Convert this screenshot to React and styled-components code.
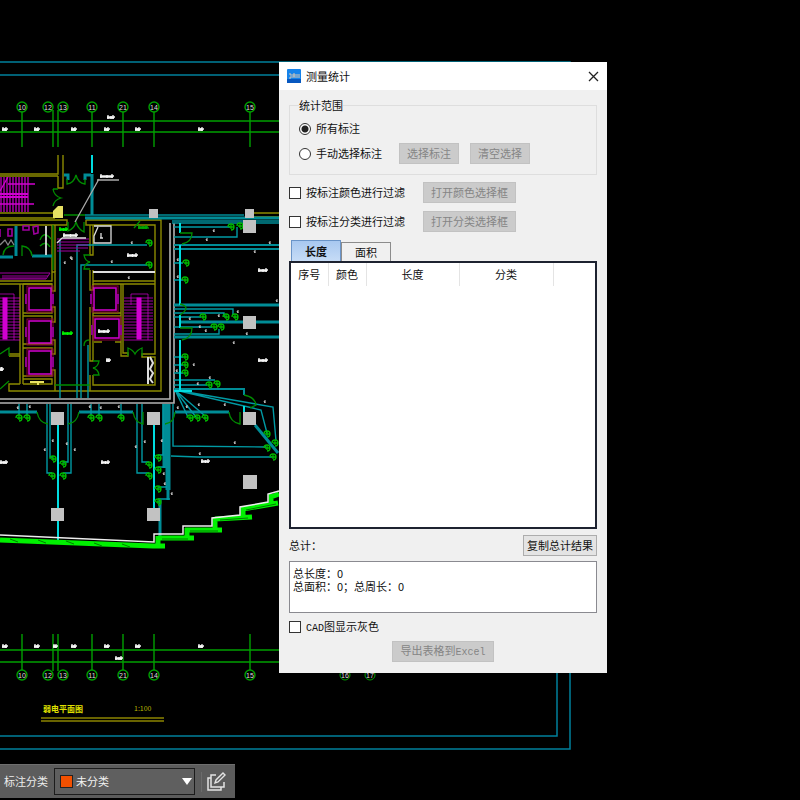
import React, { useState } from "react";
import styled, { createGlobalStyle } from "styled-components";

const CYAN = "#008c96";
const BRIGHT = "#00dce0";
const GREEN = "#00a000";
const LIME = "#00f000";
const OLIVE = "#8c8a00";
const PURPLE = "#d000d0";
const GRAY = "#c2c2c2";

// [bubble x, stem x, number]
const AXES = [
  [22, 22, "10"],
  [48, 53, "12"],
  [63, 58, "13"],
  [92, 92, "11"],
  [123, 123, "21"],
  [154, 154, "14"],
  [250, 250, "15"],
];

const COLUMNS = [
  [149, 209, 9],
  [245, 209, 9],
  [243, 220, 13],
  [243, 316, 13],
  [51, 412, 13],
  [147, 412, 13],
  [243, 412, 13],
  [243, 475, 14],
  [51, 508, 13],
  [147, 508, 13],
];

const OUTLETS = [
  [149, 243], [149, 265], [186, 263], [185, 280], [231, 227], [240, 226],
  [203, 317], [226, 317], [235, 317], [214, 327], [221, 327],
  [185, 357], [185, 365], [185, 373], [209, 385], [217, 384],
  [19, 418], [27, 418], [91, 418], [99, 418], [121, 418], [190, 418],
  [197, 418], [205, 418], [53, 459], [63, 464], [52, 476], [63, 476],
  [149, 465], [158, 458], [158, 470], [149, 476], [158, 489], [158, 502],
  [267, 434], [275, 443], [267, 448], [273, 457],
];

const MARKS = [
  [206, 240], [213, 231], [269, 243], [254, 252], [177, 260], [177, 277],
  [237, 312], [218, 316], [189, 319], [199, 327], [205, 331], [246, 334],
  [233, 343], [193, 365], [176, 371], [209, 378], [197, 384], [131, 243],
  [111, 262], [64, 263], [70, 258], [71, 259], [128, 278], [17, 408],
  [29, 407], [89, 407], [100, 408], [118, 407], [52, 441], [44, 450],
  [66, 444], [74, 450], [135, 447], [144, 442], [161, 441], [163, 474],
  [164, 484], [171, 494], [177, 408], [186, 407], [198, 405], [224, 405],
  [264, 402], [234, 443], [199, 454], [276, 301],
];

// [x, y, width]
const ROOMS = [
  [127, 255, 11], [258, 270, 10], [258, 360, 10], [0, 462, 8], [101, 462, 9],
  [201, 461, 9], [98, 331, 12], [106, 360, 5], [0, 369, 4],
];

const range = (from, to, step) => {
  const out = [];
  for (let i = from; i <= to; i += step) out.push(i);
  return out;
};

const Scribble = ({ x, y, w, color = "#f4f4f4" }) => (
  <path
    d={`M${x} ${y} h${w} M${x} ${y + 1} h${w - 1} M${x + 1} ${y - 2} v4 M${x + w / 2} ${y - 1} v3 M${x + w - 2} ${y - 2} v4`}
    stroke={color}
    strokeWidth="1.3"
    fill="none"
  />
);

const AxisRow = ({ top }) => {
  const bubbleY = top ? 107 : 675;
  return (
    <g stroke={GREEN} fill="none" strokeWidth="1.4">
      {AXES.map(([x, stem, no]) => (
        <g key={no}>
          <path d={top ? `M${stem} 110 V147` : `M${stem} 634 V671`} />
          <circle cx={x} cy={bubbleY} r="5" fill="#000" />
          <text x={x} y={bubbleY + 3} fontSize="7" fill="#ddd" stroke="none" textAnchor="middle">
            {no}
          </text>
        </g>
      ))}
      <path d={top ? "M0 121 H279 M0 132 H279" : "M0 650 H279 M0 662 H279"} />
      {[2, 34, 71, 104, 135, 198].map((x) => (
        <Scribble key={x} x={x} y={top ? 129 : 646} w={6} />
      ))}
      {!top && <Scribble x={53} y={646} w={5} />}
      <Scribble x={top ? 107 : 115} y={top ? 117 : 658} w={8} />
    </g>
  );
};

const Stairs = ({ x, width, spine }) => (
  <g stroke={PURPLE} fill="none">
    <path d={range(298, 340, 3).map((y) => `M${x} ${y} H${x + width}`).join(" ")} opacity="0.75" />
    <rect x={spine} y="298" width="4" height="41" fill={PURPLE} />
    <path d={`M${spine - 6} 305 V294 H${spine + 11} V340`} opacity="0.7" />
  </g>
);

const Lift = ({ x, y, w = 22, h = 22 }) => (
  <g fill="none">
    <rect x={x - 2} y={y - 2} width={w + 4} height={h + 4} stroke="#8b0038" />
    <rect x={x} y={y} width={w} height={h} stroke="#d400d0" strokeWidth="1.5" />
    <path d={`M${x - 3} ${y + 6} v10 M${x + w + 2} ${y + 6} v10`} stroke="#8e008e" strokeWidth="2" />
  </g>
);

const FloorPlan = () => (
  <Drawing viewBox="0 0 800 800" preserveAspectRatio="xMinYMin slice" aria-hidden="true">
    {/* sheet frame */}
    <g stroke="#00809c" fill="none" strokeWidth="1.5">
      <path d="M0 62 H570 V749 H0" />
      <path d="M0 75 H557 V736 H0" />
    </g>
    <AxisRow top />
    <AxisRow />
    <g stroke={GREEN} fill="#000">
      <circle cx="345" cy="675" r="5" />
      <circle cx="370" cy="675" r="5" />
    </g>
    <g fontSize="7" fill="#ddd" textAnchor="middle">
      <text x="345" y="678">16</text>
      <text x="370" y="678">17</text>
    </g>

    {/* stair block at the upper left */}
    <g stroke={PURPLE} fill="none">
      <path d={range(1, 29, 3).map((x) => `M${x} 177 V212`).join(" ")} strokeWidth="1.4" opacity="0.85" />
      <path d="M0 194 H28 M0 197 H28" strokeWidth="2" />
      <path d="M8 184 H35 M0 204 H34 M0 191 L8 177" strokeWidth="1.3" />
    </g>

    {/* walls */}
    <g stroke={OLIVE} fill="none" strokeWidth="1.4">
      <path d="M58 155 V174 H0 M58 176 H0 M63 155 V188 H58 V176" />
      <path d="M0 213 H58 M0 218 H55 M254 213 H279 M254 217 H279" />
      <path d="M0 220 H67 V225 H0 M52 225 V281 H0 M55 225 V272 M0 284 H52" />
      <path d="M86 220 H161 V391 H9 V384 H20 M86 220 V225 H155 V354 H142 V357 H155 V385 H93 V375" />
      <path d="M90 225 V255 H93 V225 M90 270 V290 H93 V270 M93 281 H155 M93 284 H155" />
      <path d="M20 284 V384 M23 284 V384 M9 354 H20 M9 356 H20" />
      <path d="M23 284 H52 V291 H55 V272 H52 M23 313 H52 V307 H55 V322 H52 V316 H23" />
      <path d="M23 344 H52 V340 H55 V354 H52 V348 H23 M23 376 H52 V370 H55 V391 M23 379 H52 V384 H23" />
      <path d="M93 290 V284 M121 284 V356 H128 V353 H123 V284 M90 307 V361 H93 V307 M93 313 H121 M93 316 H121 M90 375 V391 M94 342 H102 M115 342 H121" />
    </g>
    <path d="M53 218 V211 L58 206 H63 V218 Z" fill="#e8e264" />
    <path d="M30 382 H44 M38 381 V385" stroke="#e8e264" strokeWidth="2" />

    {/* outer wall of the core */}
    <path d="M170 223 V399 H0 M174 223 V403 H0" stroke="#b4b4b4" strokeWidth="1.6" fill="none" />

    {/* cyan bands */}
    <g stroke={CYAN} fill="none">
      <path d="M92 174 V215 M64 175 H68 V180 M91 175 H85 V180" strokeWidth="3" />
      <path d="M85 215 H244 M172 223 H279 M172 221 H279" strokeWidth="1.5" />
      <path d="M85 218 H279 M174 305 H279 M180 322 H279 M174 337 H279" strokeWidth="3" />
      <path d="M174 245 H279 M174 249 H279" strokeWidth="2" />
      <path d="M16 226 V256 M0 257 H13 M32 256 H52" strokeWidth="3" />
      <path d="M0 412 H37 M79 412 H133 M175 412 H229" strokeWidth="3" />
      <path d="M174 389 H244 V395 M244 406 V412" strokeWidth="2" />
      <path d="M168 404 V500 M160 500 V536" strokeWidth="3" />
      <path d="M165 404 V468 M168 404 V490" strokeWidth="5" />
      <path d="M255 425 L278 453" strokeWidth="3" />
    </g>

    {/* wiring */}
    <g stroke="#009aa4" fill="none" strokeWidth="1.4">
      <path d="M60 240 V398 M77 398 V245 H147 M81 398 V265 H147 M88 345 V398" />
      <path d="M174 227 H230 M174 237 H237 V227 M174 263 H183 M174 280 H183" />
      <path d="M174 309 H233 V315 M174 313 H224 V317 M174 317 H201 M174 327 H212 M174 334 H219 V329" />
      <path d="M174 357 H183 M174 365 H183 M174 373 H183 M174 380 H215 M174 385 H207" />
      <path d="M19 404 V415 M27 404 V415 M91 404 V415 M99 404 V415 M121 404 V415" />
      <path d="M47 404 V473 H52 M50 404 V457 H53 M71 404 V473 H63 M68 404 V462 H63" />
      <path d="M137 404 V473 H149 M142 404 V462 H149 M163 404 V455 H158 M165 467 H158 M167 487 H158 M170 499 H158" />
      <path d="M175 390 L188 417 M175 390 L196 417 M175 390 L204 415 M175 390 L182 404" />
      <path d="M175 390 L261 410 L267 433 M175 390 L273 407 L276 441 M173 404 V446 L266 447 M171 456 L198 457 H272" />
    </g>
    <g stroke={BRIGHT} fill="none" strokeWidth="2">
      <path d="M92 155 V173 M180 223 V233 M180 245 V305 M180 315 V328 M180 340 V390" />
      <path d="M58 425 V540 M154 425 V508 M244 406 V412 M174 391 H192" />
    </g>

    {/* doors */}
    <g stroke="#008c00" fill="none" strokeWidth="1.3">
      <path d="M67 179 V184 Q74 183 76 175 Q78 183 85 184 V179" />
      <path d="M53 189 Q54 196 61 198 Q54 200 53 206 M53 189 H58" />
      <path d="M68 222 V231 Q74 229 76 222 Q78 229 84 232 V222 M64 215 H85" />
      <path d="M3 255 Q4 246 14 246 M22 256 V246 Q31 247 32 256" />
      <path d="M90 255 H84 Q85 261 90 262 Q85 263 84 269 H90" />
      <path d="M93 361 H99 Q98 367 93 368 Q98 369 99 375 H93 M84 346 Q84 340 89 340" />
      <path d="M128 356 V348 Q133 350 135 354 Q137 350 142 348 V356 M0 354 L9 348 V356 M0 389 L9 381" />
      <path d="M180 233 H192 Q192 242 182 244 M180 315 Q192 307 180 304 M180 328 H192 Q192 338 182 340" />
      <path d="M37 412 Q39 423 48 424 M68 424 Q77 423 79 412 M133 412 Q135 423 143 424 V412 M165 424 Q174 423 175 412" />
      <path d="M229 412 Q230 422 240 424 V412 M244 395 Q255 397 256 405 L250 408" />
      <path d="M55 385 H90 M53 270 V225 M40 240 Q44 230 51 239 M40 246 Q46 240 50 247" />
      <path d="M134 228 L140 221 M139 228 H149" />
    </g>
    <g stroke="#00b800" fill="none" strokeWidth="1.3">
      {OUTLETS.map(([x, y]) => (
        <path key={`${x}-${y}`} d={`M${x - 3} ${y} a3 3 0 1 1 3 3 M${x - 2} ${y} h5 M${x} ${y - 2} v4`} />
      ))}
    </g>
    <Scribble x={59} y={229} w={9} color={LIME} />
    <Scribble x={62} y={333} w={11} color={LIME} />
    <Scribble x={138} y={227} w={10} color="#00a800" />

    {/* lifts and stairs */}
    <Lift x={29} y={288} />
    <Lift x={29} y={321} />
    <Lift x={29} y={351} h={23} />
    <Lift x={94} y={288} />
    <Lift x={95} y={319} w={24} h={19} />
    <Stairs x={0} width={20} spine={3} />
    <Stairs x={124} width={29} spine={137} />
    <g stroke="#a000a0" fill="none">
      <path d="M57 239 H89 M57 242 H89 M57 245 H88 M57 248 H88 M57 251 H80" />
      <path d="M0 273 H50 L46 279 H0 M2 276 H48 M2 278 H46" />
      <path d="M23 226 H29 V230 H23 Z M33 227 L38 226 V233 L34 234 Z M0 229 V237 M8 229 H12 V236 H8 Z" strokeWidth="1.6" />
    </g>

    {/* white details */}
    <g stroke="#dedede" fill="none" strokeWidth="1.3">
      <path d="M99 179 L75 222 M97 180 H119" stroke="#aaa" />
      <path d="M94 226 H111 V243 H94 V236 L98 227 M101 233 V238 M100 238 H103" />
      <path d="M46 226 V255 M93 272 H155" strokeWidth="1.8" />
      <path d="M62 238 H86 M57 243 L62 238" />
      <path d="M148 357 V384 M150 357 L153 363 L150 369 L153 373 L150 379 L153 383" strokeWidth="2" />
      <path d="M0 245 L5 240 L8 245 L11 240 L14 245" stroke="#888" />
    </g>
    <Scribble x={100} y={176} w={14} />
    <Scribble x={63} y={235} w={15} />
    {ROOMS.map(([x, y, w]) => (
      <Scribble key={`${x}-${y}`} x={x} y={y} w={w} />
    ))}
    <path
      d={MARKS.map(([x, y]) => `M${x} ${y - 1} l1 2 M${x + 1} ${y - 2} v3`).join(" ")}
      stroke="#ccc"
    />

    {/* curtain wall along the bottom edge */}
    <path
      d="M0 540 L153 546 H165 M158 538 H194 M185 530 H222 M215 519 L252 517 M243 509 L278 503 M271 497 L279 494 M158 536 V545 M187 528 V537 M215 517 V528 M243 506 V517 M271 494 V503"
      stroke={LIME}
      strokeWidth="5"
      fill="none"
    />
    <path
      d="M0 535 L154 542 V534 H183 V526 H212 V518 L240 515 V507 L268 502 V494 L279 491"
      stroke="#eee"
      strokeWidth="1.5"
      fill="none"
    />
    <path
      d="M10 539 l8 3 M38 540 l8 3 M66 541 l8 3 M94 543 l8 3 M122 544 l8 3 M162 539 H188 M190 531 H218 M220 520 L248 518 M246 510 L276 504"
      stroke="#007c00"
      fill="none"
    />

    {COLUMNS.map(([x, y, s]) => (
      <rect key={`${x}-${y}`} x={x} y={y} width={s} height={s} fill={GRAY} />
    ))}

    <g fill="#e0e000" fontFamily='"Noto Sans CJK SC", sans-serif'>
      <text x="43" y="712" fontSize="8" fontWeight="700">弱电平面图</text>
      <text x="134" y="711" fontSize="7" fill="#b8b800">1:100</text>
    </g>
    <path d="M41 718 H164 M41 721 H164" stroke="#8c8400" strokeWidth="1.5" />
  </Drawing>
);

const COLS = [
  { name: "序号", width: 37 },
  { name: "颜色", width: 38 },
  { name: "长度", width: 93 },
  { name: "分类", width: 94 },
  { name: "", width: null },
];

const App = () => {
  const [scope, setScope] = useState("all");
  const [tab, setTab] = useState("length");
  const [byColor, setByColor] = useState(false);
  const [byType, setByType] = useState(false);
  const [gray, setGray] = useState(false);

  return (
    <Workspace>
      <GlobalStyle />
      <FloorPlan />

      <Dialog role="dialog" aria-labelledby="dialog-title">
        <TitleBar>
          <AppIcon viewBox="0 0 14 14" aria-hidden="true">
            <rect width="14" height="14" rx="1" fill="#1683ea" />
            <path d="M0 10 H14 V14 H0 Z" fill="#0758c0" />
            <path d="M2 5 h2 v4 h-2 M6 9 V5 h2 v4 M6 7 h2 M10 5 v4 M12 5 v4" stroke="#d8c8b4" fill="none" />
          </AppIcon>
          <Title id="dialog-title">测量统计</Title>
          <CloseButton type="button" aria-label="Close">
            <svg width="11" height="11" viewBox="0 0 11 11">
              <path d="M1 1 L10 10 M10 1 L1 10" stroke="#222" strokeWidth="1.3" />
            </svg>
          </CloseButton>
        </TitleBar>

        <Body>
          <Group>
            <Legend>统计范围</Legend>
            <Row $height={25}>
              <Option>
                <Radio name="scope" checked={scope === "all"} onChange={() => setScope("all")} />
                所有标注
              </Option>
            </Row>
            <Row $height={25}>
              <Option $width={100}>
                <Radio name="scope" checked={scope === "manual"} onChange={() => setScope("manual")} />
                手动选择标注
              </Option>
              <Button type="button" $width={60} disabled={scope === "all"}>选择标注</Button>
              <Button type="button" $width={60} $gap={11} disabled={scope === "all"}>清空选择</Button>
            </Row>
          </Group>

          <Filters>
            <Row $height={29}>
              <Option $width={134}>
                <CheckBox checked={byColor} onChange={(e) => setByColor(e.target.checked)} />
                按标注颜色进行过滤
              </Option>
              <Button type="button" $width={93} disabled={!byColor}>打开颜色选择框</Button>
            </Row>
            <Row $height={29}>
              <Option $width={134}>
                <CheckBox checked={byType} onChange={(e) => setByType(e.target.checked)} />
                按标注分类进行过滤
              </Option>
              <Button type="button" $width={93} disabled={!byType}>打开分类选择框</Button>
            </Row>
          </Filters>

          <Tabs role="tablist">
            <Tab type="button" role="tab" $active={tab === "length"} aria-selected={tab === "length"} onClick={() => setTab("length")}>
              长度
            </Tab>
            <Tab type="button" role="tab" $active={tab === "area"} aria-selected={tab === "area"} onClick={() => setTab("area")}>
              面积
            </Tab>
          </Tabs>
          <TableBox>
            <Table>
              <thead>
                <tr>
                  {COLS.map((col) => (
                    <HeadCell key={col.name} $width={col.width}>{col.name}</HeadCell>
                  ))}
                </tr>
              </thead>
              <tbody />
            </Table>
          </TableBox>

          <TotalRow>
            <label htmlFor="totals">总计：</label>
            <Button type="button" $width={74}>复制总计结果</Button>
          </TotalRow>
          <Totals id="totals" readOnly value={"总长度：0\n总面积：0；总周长：0"} />

          <Row $height={28}>
            <Option>
              <CheckBox checked={gray} onChange={(e) => setGray(e.target.checked)} />
              <span><Latin>CAD</Latin>图显示灰色</span>
            </Option>
          </Row>
          <Footer>
            <Button type="button" $width={102} disabled>导出表格到<Latin>Excel</Latin></Button>
          </Footer>
        </Body>
      </Dialog>

      <Toolbar>
        <label htmlFor="category">标注分类</label>
        <SelectWrap>
          <Swatch />
          <Select id="category" defaultValue="none">
            <option value="none">未分类</option>
          </Select>
          <Arrow viewBox="0 0 10 7" aria-hidden="true">
            <path d="M0 0 H10 L5 7 Z" fill="#fff" />
          </Arrow>
        </SelectWrap>
        <EditButton type="button" aria-label="Edit">
          <svg width="20" height="20" viewBox="0 0 20 20" fill="none" stroke="#e4e4e4" strokeWidth="1.5">
            <path d="M9 3 H4 V15 H17 V10" />
            <path d="M4 6 H1 V18 H14 V15" />
            <path d="M8 11 L9 8 L16 1 L18 3 L11 10 Z" strokeWidth="1.4" />
          </svg>
        </EditButton>
      </Toolbar>
    </Workspace>
  );
};

const GlobalStyle = createGlobalStyle`
  * {
    box-sizing: border-box;
  }
  body {
    margin: 0;
    background: #000;
  }
  body, button, select, textarea {
    font-family: "Noto Sans CJK SC", sans-serif;
    font-size: 11px;
    line-height: 13px;
  }
`;

const Workspace = styled.main`
  position: relative;
  min-height: 100vh;
  overflow: hidden;
  background: #000;
`;

const Drawing = styled.svg`
  position: absolute;
  inset: 0;
  width: 100%;
  height: 100%;
  font-family: "Liberation Sans", sans-serif;
`;

const Dialog = styled.section`
  position: absolute;
  left: 279px;
  top: 62px;
  width: 328px;
  color: #111;
  background: #f0f0f0;
`;

const TitleBar = styled.header`
  display: flex;
  align-items: center;
  height: 28px;
  padding: 0 8px;
  background: #fff;
`;

const AppIcon = styled.svg`
  width: 14px;
  height: 14px;
  margin-right: 5px;
`;

const Title = styled.h1`
  flex: 1;
  margin: 0;
  font-size: 11px;
  font-weight: 400;
`;

const CloseButton = styled.button`
  display: flex;
  padding: 0;
  border: 0;
  background: none;
`;

const Body = styled.div`
  padding: 9px 10px 11px;
`;

const Group = styled.fieldset`
  margin: 0;
  padding: 4px 9px 8px;
  border: 1px solid #dedede;
`;

const Legend = styled.legend`
  padding: 0;
  line-height: 13px;
`;

const Row = styled.div`
  display: flex;
  align-items: center;
  height: ${({ $height }) => $height}px;
`;

const Option = styled.label`
  display: flex;
  align-items: center;
  gap: 5px;
  width: ${({ $width }) => ($width ? `${$width}px` : "auto")};
  white-space: nowrap;
`;

const Radio = styled.input.attrs({ type: "radio" })`
  appearance: none;
  width: 12px;
  height: 12px;
  margin: 0;
  border: 1px solid #333;
  border-radius: 50%;
  background: #fff;

  &:checked {
    background: radial-gradient(circle, #222 0 3px, #fff 4px);
  }
`;

const CheckBox = styled.input.attrs({ type: "checkbox" })`
  appearance: none;
  width: 12px;
  height: 12px;
  margin: 0;
  border: 1px solid #333;
  background: #fff;

  &:checked {
    background: #333;
    box-shadow: inset 0 0 0 2px #fff;
  }
`;

const Button = styled.button`
  width: ${({ $width }) => $width}px;
  height: 21px;
  margin-left: ${({ $gap }) => $gap || 0}px;
  padding: 0;
  color: #111;
  background: #e4e4e4;
  border: 1px solid #adadad;
  white-space: nowrap;

  &:disabled {
    color: #858585;
    background: #cbcbcb;
    border-color: #c2c2c2;
  }
`;

const Filters = styled.div`
  padding-top: 3px;
`;

const Tabs = styled.div`
  display: flex;
  align-items: flex-end;
  height: 25px;
  padding: 0 2px;
`;

const Tab = styled.button`
  width: 50px;
  height: ${({ $active }) => ($active ? 21 : 19)}px;
  padding: 0;
  color: #111;
  font-weight: ${({ $active }) => ($active ? 700 : 400)};
  background: ${({ $active }) => ($active ? "linear-gradient(#a8c8f0, #c6dcf6)" : "#f0f0f0")};
  border: 1px solid ${({ $active }) => ($active ? "#6a94c8" : "#8c8c8c")};
  border-bottom: 0;
`;

const TableBox = styled.div`
  min-height: 268px;
  background: #fff;
  border: 2px solid #1d2230;
`;

const Table = styled.table`
  width: 100%;
  border-collapse: collapse;
  table-layout: fixed;
`;

const HeadCell = styled.th`
  width: ${({ $width }) => ($width ? `${$width}px` : "auto")};
  height: 23px;
  padding: 0;
  font-weight: 400;
  text-align: center;

  & + & {
    border-left: 1px solid #e4e4e4;
  }
`;

const TotalRow = styled.div`
  display: flex;
  align-items: center;
  justify-content: space-between;
  height: 32px;
`;

const Totals = styled.textarea`
  display: block;
  width: 100%;
  height: 52px;
  padding: 5px 3px;
  color: #111;
  background: #fff;
  border: 1px solid #8a8a90;
  outline: none;
  resize: none;
`;

const Latin = styled.span`
  font-family: "Liberation Mono", monospace;
  font-size: 10px;
`;

const Footer = styled.footer`
  display: flex;
  justify-content: center;
`;

const Toolbar = styled.div`
  position: absolute;
  left: 0;
  bottom: 2px;
  display: flex;
  align-items: center;
  gap: 6px;
  height: 34px;
  padding: 0 5px 0 4px;
  color: #ececec;
  background: #5c5c5c;
  border-top: 1px solid #6e6e6e;
`;

const SelectWrap = styled.div`
  position: relative;
  width: 141px;
`;

const Select = styled.select`
  appearance: none;
  display: block;
  width: 100%;
  height: 27px;
  padding: 0 20px 0 21px;
  color: #f2f2f2;
  background: #5f5f5f;
  border: 1px solid #1c1c1c;
  border-radius: 0;
`;

const Swatch = styled.span`
  position: absolute;
  left: 6px;
  top: 7px;
  width: 13px;
  height: 13px;
  background: #f25000;
  border: 1px solid #222;
  pointer-events: none;
`;

const Arrow = styled.svg`
  position: absolute;
  right: 3px;
  top: 10px;
  width: 10px;
  height: 7px;
  pointer-events: none;
`;

const EditButton = styled.button`
  display: flex;
  padding: 0 3px 0 5px;
  background: none;
  border: 0;
  border-left: 1px solid #6c6c6c;
`;

export default App;
